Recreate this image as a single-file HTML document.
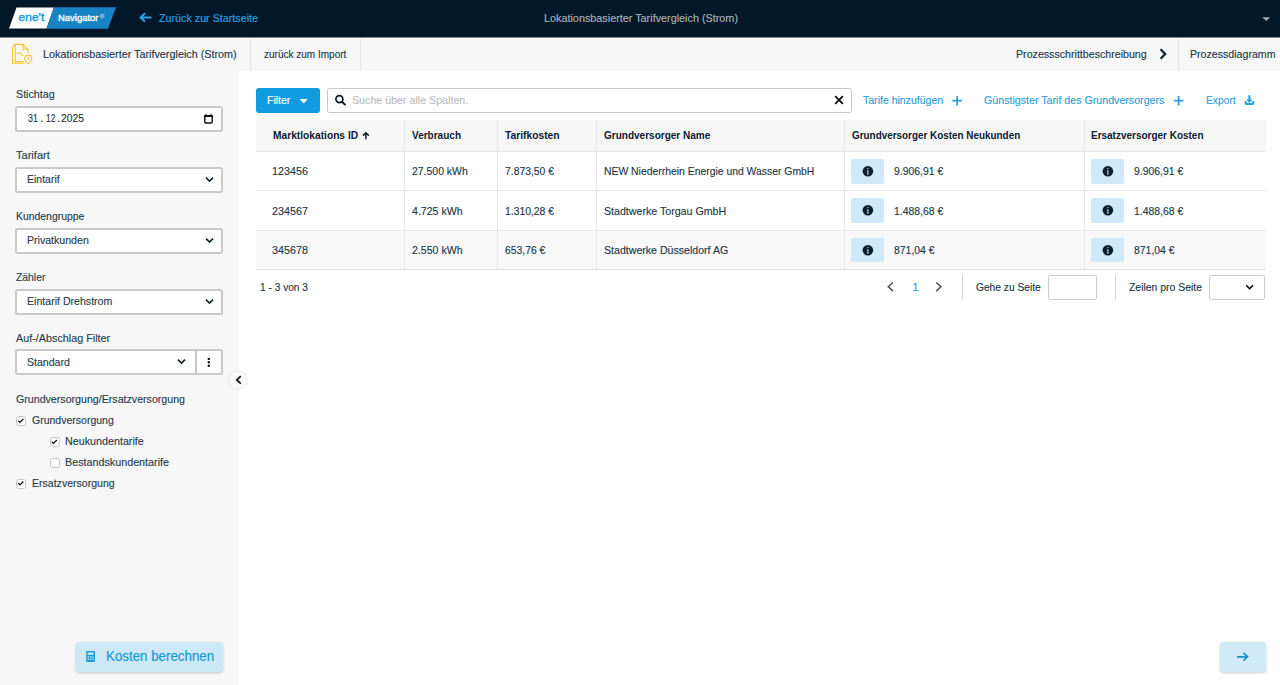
<!DOCTYPE html>
<html lang="de"><head><meta charset="utf-8"><title>Lokationsbasierter Tarifvergleich (Strom)</title>
<style>
*{box-sizing:border-box;margin:0;padding:0}
html,body{width:1280px;height:685px;overflow:hidden;background:#fff;font-family:"Liberation Sans",sans-serif;position:relative}
.a{position:absolute}
.t{position:absolute;white-space:nowrap;line-height:1;transform-origin:0 0;-webkit-text-stroke:0.15px currentColor}
.t.b{-webkit-text-stroke:0}
svg{position:absolute;overflow:visible}
.inp{position:absolute;background:#fff;border:2px solid #c9c9c9;border-radius:2.5px}
.pinp{border-width:1.6px;border-color:#cacaca}
.sep{position:absolute;width:1px;background:#e6e6e6}
.hl{position:absolute;height:1px;background:#e8e8e8}
.vl{position:absolute;width:1px;background:#e8e8e8}
.info{position:absolute;width:33px;height:24.5px;background:#cfe9f8;border-radius:2px}
.info svg{left:0;top:0}
.cb{position:absolute;width:10px;height:10px;border:1.2px solid #c2c4c6;border-radius:2.5px;background:#fff}
</style></head><body>

<!-- top bar -->
<div class="a" style="left:0;top:0;width:1280px;height:37px;background:#021727"></div>
<svg width="1280" height="37" style="left:0;top:0">
  <polygon points="16.5,7.5 54,7.5 46.5,28.6 9,28.6" fill="#ffffff"/>
  <polygon points="54,7.2 116,7.2 108,28.8 46.5,28.8" fill="#1783c3"/>
  <text x="18.6" y="21.4" font-family="Liberation Sans" font-size="11.8" fill="#1a9fe2" stroke="#1a9fe2" stroke-width="0.5" letter-spacing="0.1">ene't</text>
  <circle cx="102.3" cy="16.1" r="2.3" fill="#94c2dc"/>
  <text x="101.2" y="17.5" font-family="Liberation Sans" font-weight="bold" font-size="3.4" fill="#3d93c8">R</text>
  <path d="M140.5 17.5 H151.5 M145 13.2 L140.6 17.5 L145 21.8" fill="none" stroke="#2aa6ea" stroke-width="2" stroke-linecap="butt"/>
  <polygon points="1262.3,17.2 1270.2,17.2 1266.25,20.9" fill="#a4aeb6"/>
</svg>

<!-- second bar -->
<div class="a" style="left:0;top:37px;width:1280px;height:34px;background:#f7f7f7;border-top:1px solid #7d8388"></div>
<div class="a" style="left:0;top:38px;width:1280px;height:1px;background:#fdfdfd"></div>
<div class="sep" style="left:250px;top:39px;height:31px"></div>
<div class="sep" style="left:360px;top:39px;height:31px"></div>
<div class="sep" style="left:1178px;top:39px;height:31px"></div>
<svg width="40" height="70" style="left:0;top:0">
  <g fill="none" stroke="#f4c42a" stroke-width="1.1" stroke-linejoin="round">
    <path d="M24.6 63.2 H12.5 V47.2 L15.2 44.4 H23 L27.9 49.4 V53.6"/>
    <path d="M15.2 44.6 V61.6 H23.6"/>
    <path d="M22.8 44.6 V49.2 H27.8"/>
    <path d="M28.3 55.2 c2.1 0 3.6 1.5 3.6 3.5 c0 2 -2 3.9 -3.6 5.2 c-1.6 -1.3 -3.6 -3.2 -3.6 -5.2 c0 -2 1.5 -3.5 3.6 -3.5z"/>
  </g>
  <g fill="#f4c42a">
    <circle cx="28.3" cy="58.6" r="1.2"/>
    <rect x="16.8" y="52.7" width="3" height="1.2"/>
    <circle cx="20.6" cy="53.3" r="0.9"/>
    <circle cx="22.4" cy="55.2" r="0.9"/>
  </g>
</svg>
<svg width="10" height="14" style="left:1158px;top:47px">
  <path d="M2.6 2.2 L7.2 7 L2.6 11.8" fill="none" stroke="#0e2233" stroke-width="2.2"/>
</svg>

<!-- left panel -->
<div class="a" style="left:0;top:70px;width:239px;height:615px;background:#f7f7f7"></div>
<div class="inp" style="left:15px;top:106px;width:208px;height:26px"></div>
<svg width="12" height="12" style="left:202.5px;top:113px">
  <rect x="1.8" y="2.6" width="7.4" height="7.45" fill="none" stroke="#111" stroke-width="1.4" rx="1"/>
  <rect x="1.1" y="1.9" width="8.8" height="2.2" rx="0.6" fill="#111"/>
  <rect x="2.5" y="0.9" width="1" height="1.3" fill="#111"/><rect x="7.5" y="0.9" width="1" height="1.3" fill="#111"/>
</svg>
<div class="inp" style="left:15px;top:167px;width:208px;height:26px"></div>
<div class="inp" style="left:15px;top:228px;width:208px;height:26px"></div>
<div class="inp" style="left:15px;top:289px;width:208px;height:26px"></div>
<div class="inp" style="left:15px;top:349px;width:208px;height:26px"></div>
<div class="a" style="left:194.5px;top:350px;width:2px;height:24px;background:#c9c9c9"></div>
<svg width="240" height="400" style="left:0;top:0">
  <g fill="none" stroke="#0f2230" stroke-width="1.7">
    <path d="M206 177.7 L209.5 181 L213 177.7"/>
    <path d="M206 238.7 L209.5 242 L213 238.7"/>
    <path d="M206 299.7 L209.5 303 L213 299.7"/>
    <path d="M178 359.7 L181.5 363 L185 359.7"/>
  </g>
  <g fill="#111">
    <circle cx="208.8" cy="358.9" r="1.2"/>
    <circle cx="208.8" cy="362.3" r="1.2"/>
    <circle cx="208.8" cy="365.7" r="1.2"/>
  </g>
</svg>
<!-- collapse circle -->
<div class="a" style="left:229px;top:370.5px;width:18px;height:18px;border-radius:50%;background:#f9f9f9;box-shadow:0 0 2px rgba(0,0,0,0.18)"></div>
<svg width="10" height="12" style="left:234px;top:374px">
  <path d="M6.8 2.2 L2.8 5.9 L6.8 9.6" fill="none" stroke="#111" stroke-width="1.7"/>
</svg>

<!-- checkboxes -->
<div class="cb" style="left:16px;top:416px"></div>
<div class="cb" style="left:49.5px;top:437px"></div>
<div class="cb" style="left:49.5px;top:458px"></div>
<div class="cb" style="left:16px;top:478.5px"></div>
<svg width="240" height="500" style="left:0;top:0">
  <g fill="none" stroke="#111" stroke-width="1.3">
    <path d="M18.3 420.8 L19.9 422.4 L23.4 419.0"/>
    <path d="M51.8 441.8 L53.4 443.4 L56.9 440.0"/>
    <path d="M18.3 483.3 L19.9 484.9 L23.4 481.5"/>
  </g>
</svg>

<!-- Kosten berechnen -->
<div class="a" style="left:75.5px;top:642px;width:147.5px;height:29.5px;background:#cde9f8;border-radius:4px;box-shadow:0 1px 3px rgba(0,0,0,0.22)"></div>
<svg width="12" height="14" style="left:85px;top:650px">
  <rect x="1.2" y="1" width="8.8" height="11" rx="1" fill="#1c9ad6"/>
  <rect x="2.7" y="2.5" width="5.8" height="2.3" fill="#d0eaf8"/>
  <g fill="#d0eaf8">
    <rect x="2.7" y="6.3" width="1.4" height="1.3"/><rect x="4.9" y="6.3" width="1.4" height="1.3"/><rect x="7.1" y="6.3" width="1.4" height="1.3"/>
    <rect x="2.7" y="8.6" width="1.4" height="1.3"/><rect x="4.9" y="8.6" width="1.4" height="1.3"/><rect x="7.1" y="8.6" width="1.4" height="1.3"/>
  </g>
</svg>

<!-- toolbar -->
<div class="a" style="left:256px;top:88px;width:64px;height:25px;background:#0f9be0;border-radius:3px"></div>
<svg width="12" height="8" style="left:299px;top:98px">
  <polygon points="0.7,1 8.7,1 4.7,5.4" fill="#fff"/>
</svg>
<div class="inp" style="left:327px;top:88px;width:525px;height:24.8px;border-width:1.6px;border-color:#c6c6c6"></div>
<svg width="14" height="14" style="left:333px;top:93px">
  <circle cx="6.4" cy="6.1" r="3.5" fill="none" stroke="#0d1b28" stroke-width="1.7"/>
  <path d="M9 8.7 L12.5 12.1" stroke="#0d1b28" stroke-width="1.9"/>
</svg>
<svg width="12" height="12" style="left:833px;top:94.2px">
  <path d="M2.2 2.2 L9.9 9.9 M9.9 2.2 L2.2 9.9" stroke="#111" stroke-width="1.9"/>
</svg>
<svg width="1280" height="120" style="left:0;top:0">
  <g stroke="#2b9fd8" stroke-width="1.8">
    <path d="M952.3 100.7 H962 M957.15 96 V105.4"/>
    <path d="M1173.8 100.7 H1183.4 M1178.6 96 V105.4"/>
  </g>
  <g fill="#2b9fd8">
    <path d="M1248.3 95.3 h2.2 v4.3 h2.1 l-3.2 3.3 l-3.2 -3.3 h2.1z"/>
    <path d="M1244.6 101 h1.9 v1.9 h5.8 v-1.9 h1.9 v2.6 a1.3 1.3 0 0 1 -1.3 1.3 h-7 a1.3 1.3 0 0 1 -1.3 -1.3z"/>
  </g>
</svg>

<!-- table -->
<div class="a" style="left:256px;top:120px;width:1010px;height:31.5px;background:#f7f7f7"></div>
<div class="a" style="left:256px;top:230px;width:1010px;height:39.5px;background:#f8f8f8"></div>
<div class="hl" style="left:256px;top:151px;width:1010px"></div>
<div class="hl" style="left:256px;top:190px;width:1010px"></div>
<div class="hl" style="left:256px;top:229.5px;width:1010px"></div>
<div class="hl" style="left:256px;top:269px;width:1010px;background:#e3e3e3"></div>
<div class="vl" style="left:404px;top:120px;height:149px"></div>
<div class="vl" style="left:497px;top:120px;height:149px"></div>
<div class="vl" style="left:596px;top:120px;height:149px"></div>
<div class="vl" style="left:843.5px;top:120px;height:149px"></div>
<div class="vl" style="left:1084px;top:120px;height:149px"></div>
<svg width="10" height="10" style="left:361px;top:131px">
  <path d="M4.9 1.8 V8.2 M2 4.6 L4.9 1.7 L7.8 4.6" fill="none" stroke="#0c2033" stroke-width="1.5"/>
</svg>

<div class="info" style="left:851px;top:159px"><svg width="33" height="25"><circle cx="16.9" cy="12.3" r="5.3" fill="#0b1d2e"/><circle cx="16.9" cy="9.6" r="0.8" fill="#9fb3c4"/><path d="M16.2 11.3 h1.3 v3.6 h0.6 v0.7 h-2.4 v-0.7 h0.5 v-2.9 h-0.5z" fill="#b8c6d2"/></svg></div>
<div class="info" style="left:1091px;top:159px"><svg width="33" height="25"><circle cx="16.9" cy="12.3" r="5.3" fill="#0b1d2e"/><circle cx="16.9" cy="9.6" r="0.8" fill="#9fb3c4"/><path d="M16.2 11.3 h1.3 v3.6 h0.6 v0.7 h-2.4 v-0.7 h0.5 v-2.9 h-0.5z" fill="#b8c6d2"/></svg></div>
<div class="info" style="left:851px;top:198px"><svg width="33" height="25"><circle cx="16.9" cy="12.3" r="5.3" fill="#0b1d2e"/><circle cx="16.9" cy="9.6" r="0.8" fill="#9fb3c4"/><path d="M16.2 11.3 h1.3 v3.6 h0.6 v0.7 h-2.4 v-0.7 h0.5 v-2.9 h-0.5z" fill="#b8c6d2"/></svg></div>
<div class="info" style="left:1091px;top:198px"><svg width="33" height="25"><circle cx="16.9" cy="12.3" r="5.3" fill="#0b1d2e"/><circle cx="16.9" cy="9.6" r="0.8" fill="#9fb3c4"/><path d="M16.2 11.3 h1.3 v3.6 h0.6 v0.7 h-2.4 v-0.7 h0.5 v-2.9 h-0.5z" fill="#b8c6d2"/></svg></div>
<div class="info" style="left:851px;top:237.5px"><svg width="33" height="25"><circle cx="16.9" cy="12.3" r="5.3" fill="#0b1d2e"/><circle cx="16.9" cy="9.6" r="0.8" fill="#9fb3c4"/><path d="M16.2 11.3 h1.3 v3.6 h0.6 v0.7 h-2.4 v-0.7 h0.5 v-2.9 h-0.5z" fill="#b8c6d2"/></svg></div>
<div class="info" style="left:1091px;top:237.5px"><svg width="33" height="25"><circle cx="16.9" cy="12.3" r="5.3" fill="#0b1d2e"/><circle cx="16.9" cy="9.6" r="0.8" fill="#9fb3c4"/><path d="M16.2 11.3 h1.3 v3.6 h0.6 v0.7 h-2.4 v-0.7 h0.5 v-2.9 h-0.5z" fill="#b8c6d2"/></svg></div>

<!-- pagination -->
<svg width="1280" height="310" style="left:0;top:0">
  <g fill="none" stroke="#4a4f55" stroke-width="1.5">
    <path d="M893 282.5 L888.3 286.8 L893 291.1"/>
    <path d="M936.2 282.5 L940.9 286.8 L936.2 291.1"/>
  </g>
</svg>
<div class="a" style="left:961.5px;top:274.5px;width:1.5px;height:24.5px;background:#cfd2d4"></div>
<div class="a" style="left:1114.5px;top:274.5px;width:1.5px;height:24.5px;background:#cfd2d4"></div>
<div class="inp pinp" style="left:1047.5px;top:274.5px;width:49.5px;height:25px"></div>
<div class="inp pinp" style="left:1209px;top:274.5px;width:55.7px;height:25px"></div>
<svg width="20" height="10" style="left:1244px;top:281px"><path d="M2.2 4.4 L5.6 7.6 L9 4.4" fill="none" stroke="#111" stroke-width="1.6"/></svg>

<!-- next button -->
<div class="a" style="left:1219.5px;top:642px;width:46.5px;height:30px;background:#d0eaf8;border-radius:4px;box-shadow:0 1px 3px rgba(0,0,0,0.2)"></div>
<svg width="14" height="12" style="left:1236px;top:651px">
  <path d="M1 5.8 H11.5 M7.5 1.9 L11.5 5.8 L7.5 9.7" fill="none" stroke="#1b8fd3" stroke-width="1.8"/>
</svg>

<span class="t" style="left:159.00px;top:13.00px;font-size:11.50px;transform:scaleX(0.9331);color:#2aa3e6;">Zurück zur Startseite</span>
<span class="t" style="left:543.60px;top:13.00px;font-size:11.50px;transform:scaleX(0.9406);color:#a9b3bb;">Lokationsbasierter Tarifvergleich (Strom)</span>
<span class="t" style="left:57.60px;top:14.00px;font-size:9.30px;transform:scaleX(1.0176);color:#eef5fa;-webkit-text-stroke:0.45px #eef5fa;">Navigator</span>
<span class="t" style="left:42.80px;top:49.00px;font-size:11.50px;transform:scaleX(0.9392);color:#22384a;">Lokationsbasierter Tarifvergleich (Strom)</span>
<span class="t" style="left:264.00px;top:49.00px;font-size:11.00px;transform:scaleX(0.9099);color:#22384a;">zurück zum Import</span>
<span class="t" style="left:1015.50px;top:49.00px;font-size:11.50px;transform:scaleX(0.9253);color:#22384a;">Prozessschrittbeschreibung</span>
<span class="t" style="left:1189.50px;top:49.00px;font-size:11.50px;transform:scaleX(0.9228);color:#22384a;">Prozessdiagramm</span>
<span class="t" style="left:15.80px;top:89.00px;font-size:11.50px;transform:scaleX(0.9290);color:#283d4c;">Stichtag</span>
<span class="t" style="left:27.70px;top:113.00px;font-size:11.50px;transform:scaleX(0.7656);color:#1f3445;">31</span>
<span class="t" style="left:40.30px;top:113.00px;font-size:11.50px;color:#1f3445;">.</span>
<span class="t" style="left:45.70px;top:113.00px;font-size:11.50px;transform:scaleX(0.7266);color:#1f3445;">12</span>
<span class="t" style="left:57.00px;top:113.00px;font-size:11.50px;color:#1f3445;">.</span>
<span class="t" style="left:60.70px;top:113.00px;font-size:11.50px;transform:scaleX(0.8984);color:#1f3445;">2025</span>
<span class="t" style="left:16.10px;top:150.00px;font-size:11.50px;transform:scaleX(0.9616);color:#283d4c;">Tarifart</span>
<span class="t" style="left:27.20px;top:174.00px;font-size:11.50px;transform:scaleX(0.9121);color:#283d4c;">Eintarif</span>
<span class="t" style="left:16.10px;top:211.00px;font-size:11.50px;transform:scaleX(0.9052);color:#283d4c;">Kundengruppe</span>
<span class="t" style="left:27.20px;top:235.00px;font-size:11.50px;transform:scaleX(0.9203);color:#283d4c;">Privatkunden</span>
<span class="t" style="left:15.80px;top:272.00px;font-size:11.50px;transform:scaleX(0.9018);color:#283d4c;">Zähler</span>
<span class="t" style="left:27.20px;top:296.00px;font-size:11.50px;transform:scaleX(0.9207);color:#283d4c;">Eintarif Drehstrom</span>
<span class="t" style="left:15.80px;top:333.00px;font-size:11.50px;transform:scaleX(0.9387);color:#283d4c;">Auf-/Abschlag Filter</span>
<span class="t" style="left:27.20px;top:357.00px;font-size:11.50px;transform:scaleX(0.9186);color:#283d4c;">Standard</span>
<span class="t" style="left:15.80px;top:394.00px;font-size:11.50px;transform:scaleX(0.9245);color:#283d4c;">Grundversorgung/Ersatzversorgung</span>
<span class="t" style="left:31.50px;top:415.00px;font-size:11.50px;transform:scaleX(0.9140);color:#283d4c;">Grundversorgung</span>
<span class="t" style="left:65.00px;top:436.00px;font-size:11.50px;transform:scaleX(0.9336);color:#283d4c;">Neukundentarife</span>
<span class="t" style="left:65.00px;top:457.00px;font-size:11.50px;transform:scaleX(0.9348);color:#283d4c;">Bestandskundentarife</span>
<span class="t" style="left:31.50px;top:478.00px;font-size:11.50px;transform:scaleX(0.9174);color:#283d4c;">Ersatzversorgung</span>
<span class="t" style="left:105.50px;top:649.00px;font-size:14.00px;transform:scaleX(0.9520);color:#1497d8;">Kosten berechnen</span>
<span class="t" style="left:266.50px;top:95.00px;font-size:11.50px;transform:scaleX(0.9100);color:#ffffff;">Filter</span>
<span class="t" style="left:352.20px;top:95.00px;font-size:11.50px;transform:scaleX(0.9274);color:#b9bec2;">Suche über alle Spalten.</span>
<span class="t" style="left:862.80px;top:95.00px;font-size:11.50px;transform:scaleX(0.9155);color:#2b9fd8;">Tarife hinzufügen</span>
<span class="t" style="left:984.00px;top:95.00px;font-size:11.50px;transform:scaleX(0.9263);color:#2b9fd8;">Günstigster Tarif des Grundversorgers</span>
<span class="t" style="left:1205.80px;top:95.00px;font-size:11.50px;transform:scaleX(0.8932);color:#2b9fd8;">Export</span>
<span class="t b" style="left:272.50px;top:130.00px;font-size:11.50px;transform:scaleX(0.8878);font-weight:bold;color:#0c2033;">Marktlokations ID</span>
<span class="t b" style="left:411.90px;top:130.00px;font-size:11.50px;transform:scaleX(0.8711);font-weight:bold;color:#0c2033;">Verbrauch</span>
<span class="t b" style="left:505.00px;top:130.00px;font-size:11.50px;transform:scaleX(0.8929);font-weight:bold;color:#0c2033;">Tarifkosten</span>
<span class="t b" style="left:604.20px;top:130.00px;font-size:11.50px;transform:scaleX(0.8710);font-weight:bold;color:#0c2033;">Grundversorger Name</span>
<span class="t b" style="left:851.60px;top:130.00px;font-size:11.50px;transform:scaleX(0.8601);font-weight:bold;color:#0c2033;">Grundversorger Kosten Neukunden</span>
<span class="t b" style="left:1091.30px;top:130.00px;font-size:11.50px;transform:scaleX(0.8671);font-weight:bold;color:#0c2033;">Ersatzversorger Kosten</span>
<span class="t" style="left:272.20px;top:166.00px;font-size:11.50px;transform:scaleX(0.9349);color:#22384a;">123456</span>
<span class="t" style="left:411.60px;top:166.00px;font-size:11.50px;transform:scaleX(0.9079);color:#22384a;">27.500 kWh</span>
<span class="t" style="left:505.00px;top:166.00px;font-size:11.50px;transform:scaleX(0.8997);color:#22384a;">7.873,50 €</span>
<span class="t" style="left:604.20px;top:166.00px;font-size:11.50px;transform:scaleX(0.9032);color:#22384a;">NEW Niederrhein Energie und Wasser GmbH</span>
<span class="t" style="left:893.90px;top:166.00px;font-size:11.50px;transform:scaleX(0.9071);color:#22384a;">9.906,91 €</span>
<span class="t" style="left:1133.80px;top:166.00px;font-size:11.50px;transform:scaleX(0.9071);color:#22384a;">9.906,91 €</span>
<span class="t" style="left:272.20px;top:206.00px;font-size:11.50px;transform:scaleX(0.9349);color:#22384a;">234567</span>
<span class="t" style="left:411.60px;top:206.00px;font-size:11.50px;transform:scaleX(0.9200);color:#22384a;">4.725 kWh</span>
<span class="t" style="left:505.00px;top:206.00px;font-size:11.50px;transform:scaleX(0.9016);color:#22384a;">1.310,28 €</span>
<span class="t" style="left:604.20px;top:206.00px;font-size:11.50px;transform:scaleX(0.9243);color:#22384a;">Stadtwerke Torgau GmbH</span>
<span class="t" style="left:893.90px;top:206.00px;font-size:11.50px;transform:scaleX(0.9071);color:#22384a;">1.488,68 €</span>
<span class="t" style="left:1133.80px;top:206.00px;font-size:11.50px;transform:scaleX(0.9071);color:#22384a;">1.488,68 €</span>
<span class="t" style="left:272.20px;top:245.00px;font-size:11.50px;transform:scaleX(0.9349);color:#22384a;">345678</span>
<span class="t" style="left:411.60px;top:245.00px;font-size:11.50px;transform:scaleX(0.9200);color:#22384a;">2.550 kWh</span>
<span class="t" style="left:505.00px;top:245.00px;font-size:11.50px;transform:scaleX(0.9006);color:#22384a;">653,76 €</span>
<span class="t" style="left:604.20px;top:245.00px;font-size:11.50px;transform:scaleX(0.9210);color:#22384a;">Stadtwerke Düsseldorf AG</span>
<span class="t" style="left:893.90px;top:245.00px;font-size:11.50px;transform:scaleX(0.9073);color:#22384a;">871,04 €</span>
<span class="t" style="left:1133.80px;top:245.00px;font-size:11.50px;transform:scaleX(0.9073);color:#22384a;">871,04 €</span>
<span class="t" style="left:260.30px;top:282.00px;font-size:11.50px;transform:scaleX(0.8832);color:#22384a;">1 - 3 von 3</span>
<span class="t" style="left:912.30px;top:282.00px;font-size:11.50px;color:#2b9fd8;">1</span>
<span class="t" style="left:975.60px;top:282.00px;font-size:11.50px;transform:scaleX(0.8875);color:#22384a;">Gehe zu Seite</span>
<span class="t" style="left:1129.00px;top:282.00px;font-size:11.50px;transform:scaleX(0.9063);color:#22384a;">Zeilen pro Seite</span>
</body></html>
